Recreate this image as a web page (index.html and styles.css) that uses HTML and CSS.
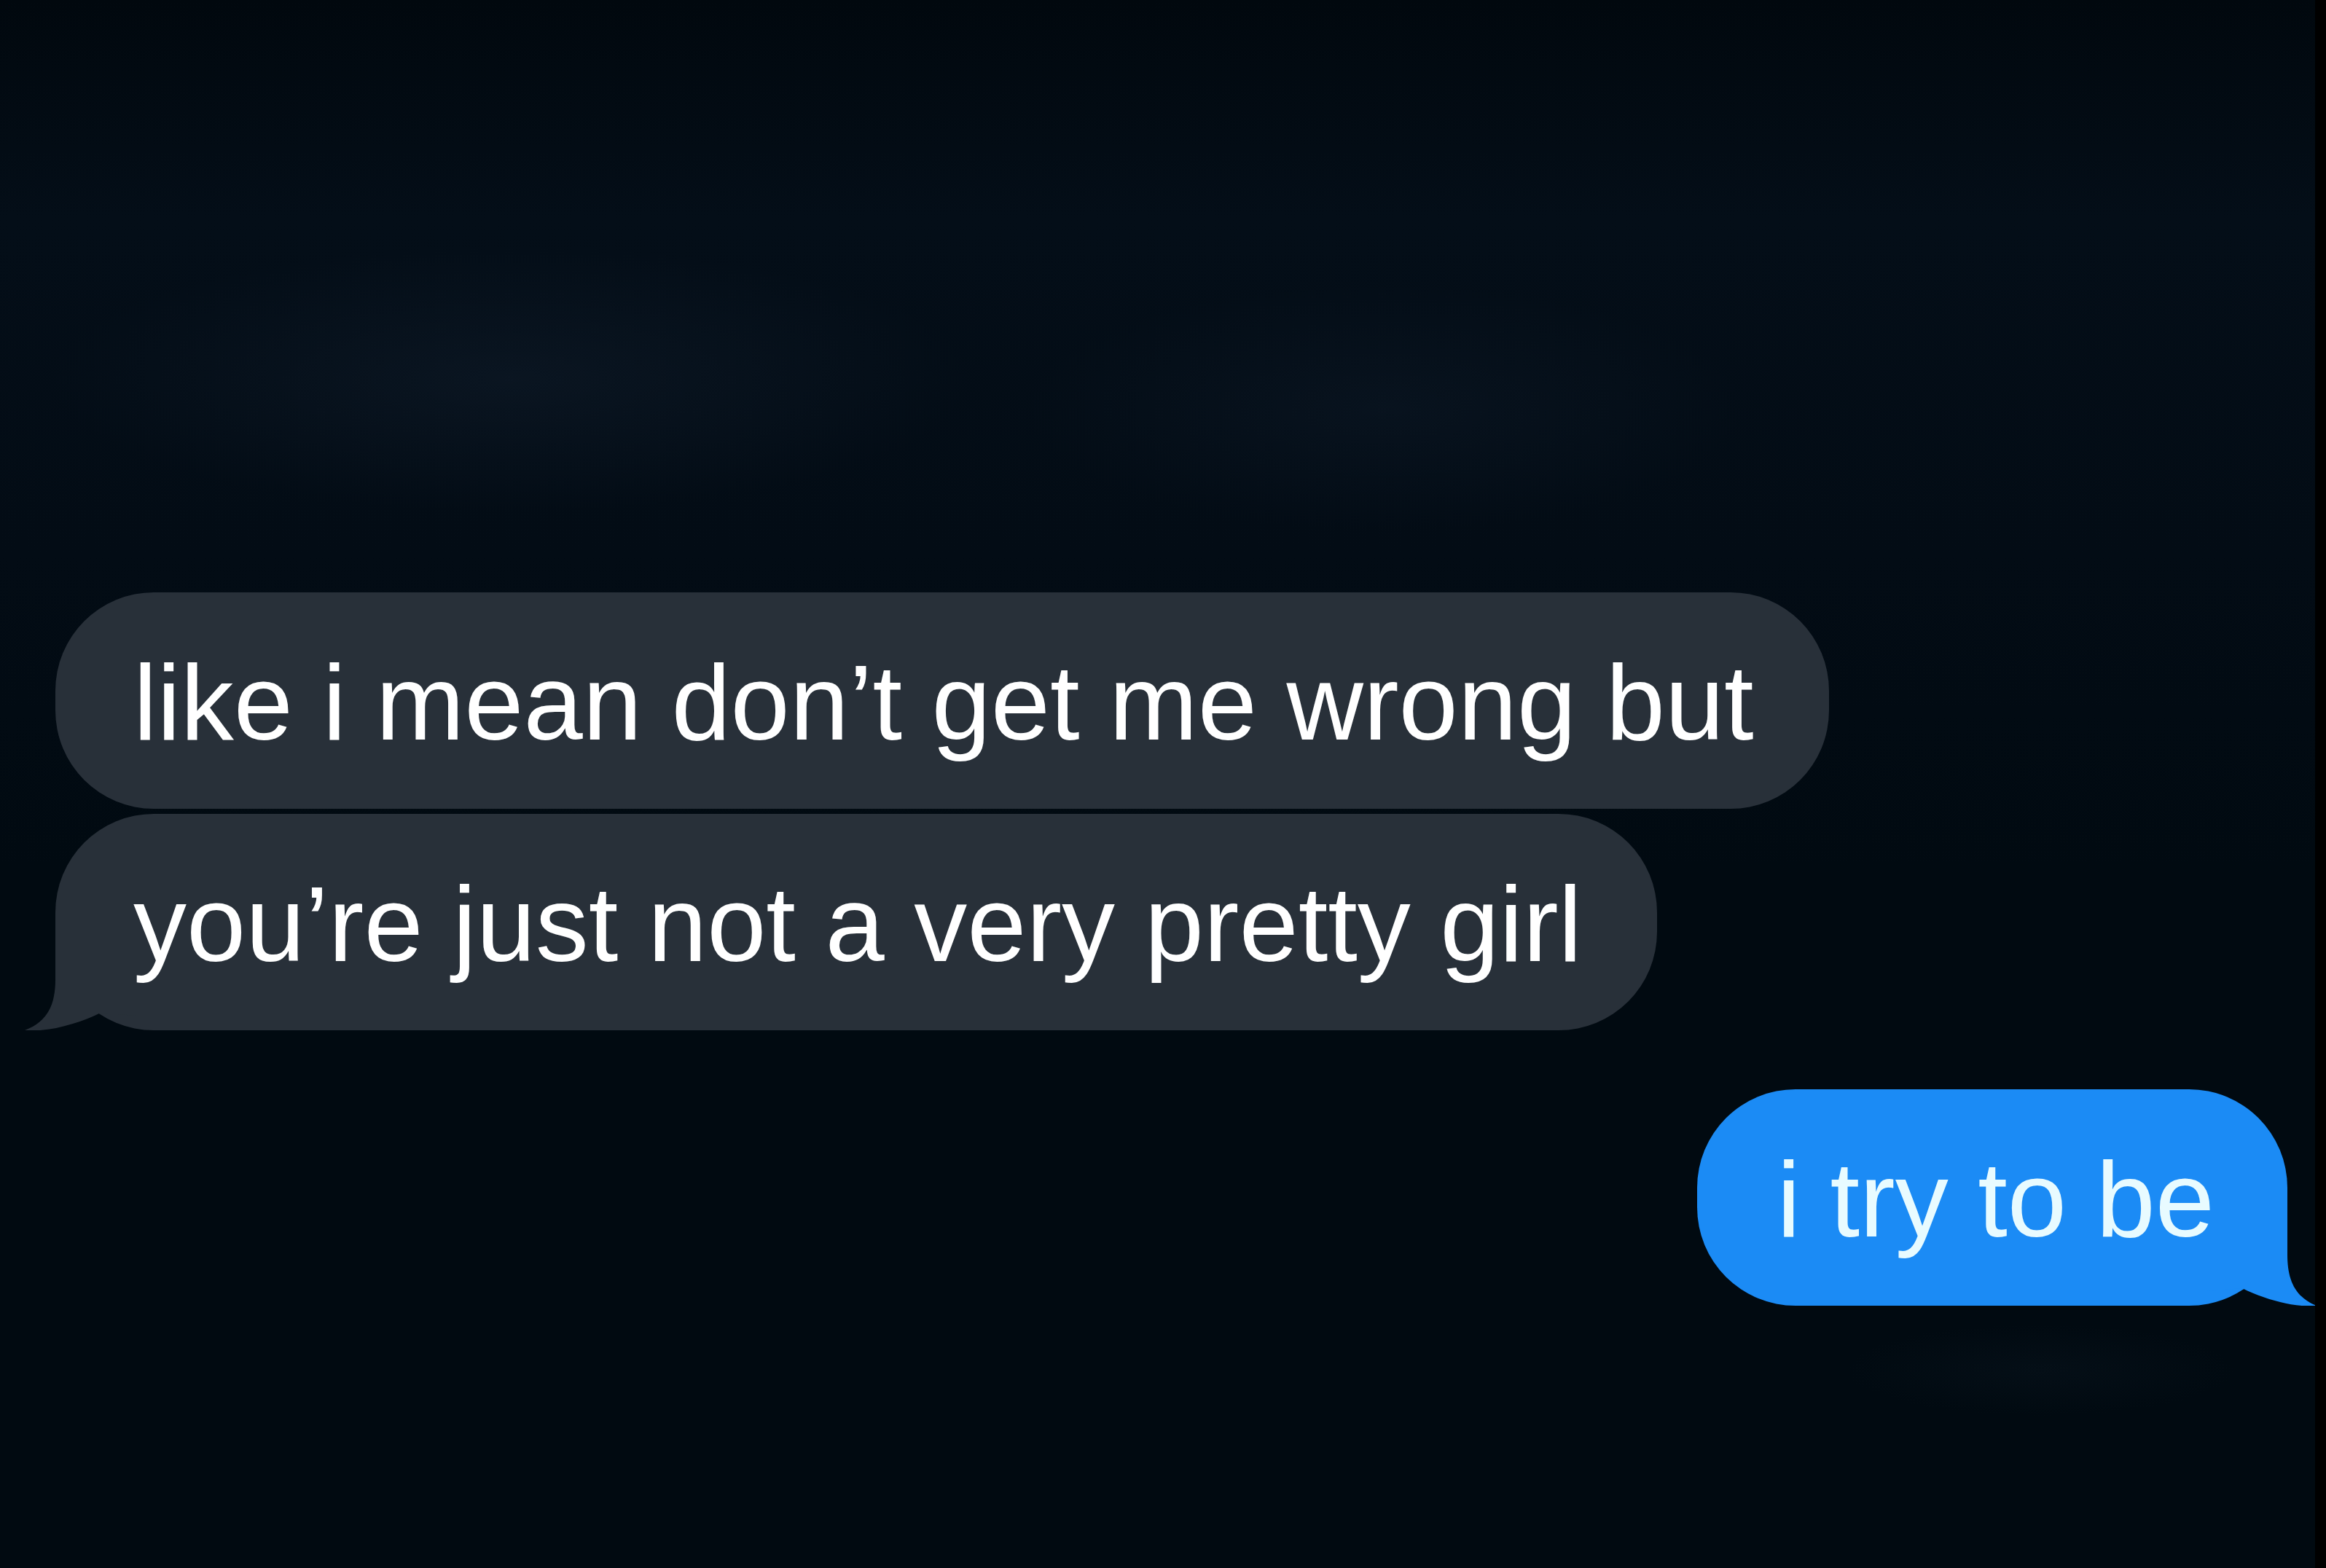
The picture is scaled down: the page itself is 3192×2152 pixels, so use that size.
FILE: index.html
```html
<!DOCTYPE html>
<html lang="en">
<head>
  <meta charset="UTF-8">
  <meta name="viewport" content="width=device-width, initial-scale=1.0">
  <title>Messages</title>
  <link rel="stylesheet" href="styles.css">
</head>
<body>
  <div class="screen">
    <div class="thread">

      <!-- incoming -->
      <div class="msg received">
        <p class="bubble">like i mean don’t get me wrong but</p>
      </div>
      <div class="msg received">
        <p class="bubble">you’re just not a very pretty girl
          <svg class="tail" viewBox="0 0 260 160" aria-hidden="true">
            <path d="M50,0 L50,90 C50,124 40,148 8,160 C42,163 84,150 112,136 L160,140 L160,0 Z"/>
          </svg>
        </p>
      </div>

      <!-- outgoing -->
      <div class="msg sent">
        <p class="bubble">i try to be
          <svg class="tail" viewBox="0 0 260 160" aria-hidden="true">
            <path d="M50,0 L50,90 C50,124 40,148 10,160 C42,163 84,150 112,136 L160,140 L160,0 Z"/>
          </svg>
        </p>
      </div>

    </div>
  </div>
</body>
</html>
```

FILE: styles.css
```css
html, body {
  margin: 0;
  height: 100%;
}
body {
  background-color: #010a11;
  font-family: "Liberation Sans", Arial, sans-serif;
}
.screen {
  height: 2152px;
  box-sizing: border-box;
  border-right: 15px solid #000;
  overflow: hidden;
  background:
    radial-gradient(ellipse 900px 260px at 700px 520px, rgba(16, 28, 42, 0.55), transparent 70%),
    radial-gradient(ellipse 700px 240px at 1900px 560px, rgba(14, 26, 40, 0.45), transparent 70%),
    radial-gradient(ellipse 380px 90px at 2800px 1880px, rgba(12, 24, 34, 0.35), transparent 70%),
    linear-gradient(#01080e 0, #040e18 300px, #030c15 760px, #010a11 1200px);
}
.thread {
  display: flex;
  flex-direction: column;
  padding: 813px 38px 0 76px;
}
.msg {
  display: flex;
}
.msg + .msg {
  margin-top: 7px;
}
.msg.sent {
  justify-content: flex-end;
  margin-top: 81px;
}
.bubble {
  position: relative;
  z-index: 0;
  margin: 0;
  padding: 64px 103px 58px 107px;
  border-radius: 135px;
  font-size: 146px;
  line-height: 175px;
  white-space: nowrap;
  color: #fff;
}
.received .bubble {
  background-color: #283039;
}
.sent .bubble {
  padding: 64px 100px 58px 110px;
  background-color: #1b8bf5;
  color: #e8fbff;
}
.tail {
  position: absolute;
  z-index: -1;
  bottom: 0;
  width: 260px;
  height: 160px;
}
.received .tail {
  left: -50px;
}
.received .tail path {
  fill: #283039;
}
.sent .tail {
  right: -50px;
  transform: scaleX(-1);
}
.sent .tail path {
  fill: #1b8bf5;
}
```
